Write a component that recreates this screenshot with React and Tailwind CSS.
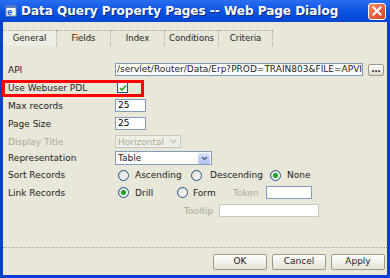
import { useState } from "react";

const font = { fontFamily: '"DejaVu Sans", Verdana, sans-serif' };

function Radio({ checked }) {
  return (
    <span className="flex h-[11px] w-[11px] shrink-0 items-center justify-center rounded-full border border-[#1c5180] bg-gradient-to-br from-[#dcdcd6] to-white">
      {checked && <span className="h-[5px] w-[5px] rounded-full bg-[#21a121]" />}
    </span>
  );
}

function Row({ label, disabled, children }) {
  return (
    <div className="flex items-center">
      <span className={`w-[107px] shrink-0 ${disabled ? "text-[#aca899]" : "text-[#222]"}`}>{label}</span>
      {children}
    </div>
  );
}

function XpButton({ children }) {
  return (
    <button className="h-[16px] w-[54px] rounded-[2px] border border-[#9c9a8c] bg-gradient-to-b from-white to-[#e6e3d3] text-[9px] text-[#222]">
      {children}
    </button>
  );
}

export default function App() {
  const [tab] = useState("General");
  const tabs = ["General", "Fields", "Index", "Conditions", "Criteria"];

  return (
    <div className="flex h-[278px] w-[390px] flex-col bg-[#0a3fd0]" style={font}>
      {/* title bar */}
      <div className="flex h-[22px] shrink-0 items-center bg-gradient-to-b from-[#2a6ef0] via-[#0854e3] to-[#0646cf] pl-[5px] pr-[4px]">
        <svg width="12" height="12" viewBox="0 0 12 12" className="shrink-0">
          <rect x="1" y="1" width="10" height="10" fill="#fff" stroke="#7a8ca8" />
          <rect x="1" y="1" width="10" height="2" fill="#5a7dc0" />
          <text x="2" y="10" fontSize="8" fontWeight="bold" fill="#1f5fc8" fontFamily="DejaVu Sans">e</text>
        </svg>
        <span
          className="ml-[4px] text-[12px] font-bold leading-none text-white"
          style={{ fontFamily: '"DejaVu Sans", sans-serif', textShadow: "1px 1px 0 #0a2a8a" }}
        >
          Data Query Property Pages -- Web Page Dialog
        </span>
        <span className="ml-auto flex h-[17px] w-[18px] items-center justify-center rounded-[3px] border border-white bg-gradient-to-br from-[#f08a6a] to-[#d2401c]">
          <svg width="10" height="10" viewBox="0 0 10 10">
            <path d="M1.5 1.5 L8.5 8.5 M8.5 1.5 L1.5 8.5" stroke="#fff" strokeWidth="2" strokeLinecap="square" />
          </svg>
        </span>
      </div>

      {/* body */}
      <div className="relative mx-[3px] mb-[3px] flex flex-1 flex-col bg-[#e8e7d8]">
        <div className="mt-[8px] flex h-[16px] items-stretch">
          {tabs.map((t) => (
            <div
              key={t}
              className={`flex w-[54px] items-center justify-center border-r border-t border-dotted border-[#a8a798] text-[8.5px] text-[#222] ${
                t === tab ? "bg-[#efeee4]" : ""
              }`}
            >
              {t}
            </div>
          ))}
        </div>

        <div className="mt-[17px] flex flex-col gap-[5px] pl-[5px] text-[9px] leading-[12px]">
          <Row label="API">
            <div className="h-[13px] w-[248px] overflow-hidden whitespace-nowrap border border-[#7f9db9] bg-white pl-[1px] text-[9px] leading-[11px] text-[#222]">
              /servlet/Router/Data/Erp?PROD=TRAIN803&amp;FILE=APVI
            </div>
            <span className="ml-[5px] flex h-[12px] w-[16px] items-center justify-center rounded-[2px] border border-[#9c9a8c] bg-gradient-to-b from-white to-[#e0ddd0] text-[8px] font-bold leading-none">
              ...
            </span>
          </Row>
          <Row label="Use Webuser PDL">
            <span className="my-[1px] ml-[2px] flex h-[11px] w-[11px] items-center justify-center border border-[#1c5180] bg-white">
              <svg width="8" height="8" viewBox="0 0 8 8">
                <path d="M1 4 L3 6 L7 1.5" fill="none" stroke="#21a121" strokeWidth="1.6" />
              </svg>
            </span>
          </Row>
          <Row label="Max records">
            <div className="h-[13px] w-[31px] border border-[#7f9db9] bg-white pl-[2px] leading-[11px]">25</div>
          </Row>
          <Row label="Page Size">
            <div className="h-[13px] w-[31px] border border-[#7f9db9] bg-white pl-[2px] leading-[11px]">25</div>
          </Row>
          <Row label="Display Title" disabled>
            <div className="flex h-[13px] w-[66px] items-center border border-[#c9c7ba] bg-[#f0efe6] pl-[2px] text-[#aca899]">
              <span className="flex-1">Horizontal</span>
              <span className="mr-[1px] flex h-[10px] w-[11px] items-center justify-center bg-[#eeede5]">
                <svg width="7" height="5" viewBox="0 0 7 5"><path d="M1 1 L3.5 3.5 L6 1" fill="none" stroke="#c9c7ba" strokeWidth="1.4" /></svg>
              </span>
            </div>
          </Row>
          <div className="-mt-[2px]">
            <Row label="Representation">
              <div className="flex h-[14px] w-[97px] items-center border border-[#7f9db9] bg-white pl-[2px] text-[#222]">
                <span className="flex-1">Table</span>
                <span className="mr-[1px] flex h-[11px] w-[12px] items-center justify-center rounded-[1px] bg-gradient-to-b from-[#d8e2fb] to-[#b4c3f3]">
                  <svg width="7" height="5" viewBox="0 0 7 5"><path d="M1 1 L3.5 3.5 L6 1" fill="none" stroke="#4d6185" strokeWidth="1.5" /></svg>
                </span>
              </div>
            </Row>
          </div>
          <div className="-mt-[1px]">
            <Row label="Sort Records">
              <div className="ml-[3px] flex items-center text-[#222]">
                <Radio />
                <span className="ml-[6px] w-[56px]">Ascending</span>
                <Radio />
                <span className="ml-[8px] w-[60px]">Descending</span>
                <Radio checked />
                <span className="ml-[6px]">None</span>
              </div>
            </Row>
          </div>
          <Row label="Link Records">
            <div className="ml-[3px] flex items-center text-[#222]">
              <Radio checked />
              <span className="ml-[6px] w-[42px]">Drill</span>
              <Radio />
              <span className="ml-[5px] w-[40px]">Form</span>
              <span className="w-[33px] text-[#aca899]">Token</span>
              <div className="h-[13px] w-[46px] border border-[#7f9db9] bg-white" />
            </div>
          </Row>
          <div className="flex items-center pl-[176px]">
            <span className="w-[35px] text-[#aca899]">Tooltip</span>
            <div className="h-[13px] w-[100px] border border-[#c9c7ba] bg-white" />
          </div>
        </div>

        <div className="mt-auto border-t border-dotted border-[#a8a798]" />
        <div className="flex h-[27px] items-center justify-end gap-[5px] pr-[2px]">
          <XpButton>OK</XpButton>
          <XpButton>Cancel</XpButton>
          <XpButton>Apply</XpButton>
        </div>

        {/* annotation */}
        <div className="pointer-events-none absolute left-[-1px] top-[58px] h-[17px] w-[142px] border-[3px] border-[#ff0000]" />
      </div>
    </div>
  );
}
